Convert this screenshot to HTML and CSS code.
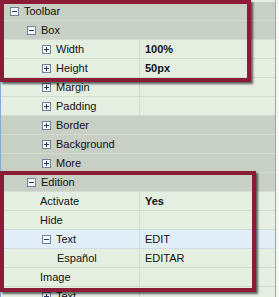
FILE: index.html
```html
<!DOCTYPE html>
<html lang="en">
<head>
    <meta charset="UTF-8">
    <title>Property Grid</title>
    <link rel="stylesheet" href="styles.css">
</head>
<body>
    <div class="panel">
        <div class="row group"><span class="name lvl1"><svg class="exp" viewBox="0 0 9 9"><rect x="0.5" y="0.5" width="8" height="8"/><path d="M2 4.5h5"/></svg>Toolbar</span></div>
        <div class="row group"><span class="name lvl2"><svg class="exp" viewBox="0 0 9 9"><rect x="0.5" y="0.5" width="8" height="8"/><path d="M2 4.5h5"/></svg>Box</span></div>
        <div class="row"><span class="name lvl3"><svg class="exp" viewBox="0 0 9 9"><rect x="0.5" y="0.5" width="8" height="8"/><path d="M2 4.5h5M4.5 2v5"/></svg>Width</span><span class="value strong">100%</span></div>
        <div class="row"><span class="name lvl3"><svg class="exp" viewBox="0 0 9 9"><rect x="0.5" y="0.5" width="8" height="8"/><path d="M2 4.5h5M4.5 2v5"/></svg>Height</span><span class="value strong">50px</span></div>
        <div class="row"><span class="name lvl3"><svg class="exp" viewBox="0 0 9 9"><rect x="0.5" y="0.5" width="8" height="8"/><path d="M2 4.5h5M4.5 2v5"/></svg>Margin</span><span class="value"></span></div>
        <div class="row"><span class="name lvl3"><svg class="exp" viewBox="0 0 9 9"><rect x="0.5" y="0.5" width="8" height="8"/><path d="M2 4.5h5M4.5 2v5"/></svg>Padding</span><span class="value"></span></div>
        <div class="row group"><span class="name lvl3"><svg class="exp" viewBox="0 0 9 9"><rect x="0.5" y="0.5" width="8" height="8"/><path d="M2 4.5h5M4.5 2v5"/></svg>Border</span></div>
        <div class="row group"><span class="name lvl3"><svg class="exp" viewBox="0 0 9 9"><rect x="0.5" y="0.5" width="8" height="8"/><path d="M2 4.5h5M4.5 2v5"/></svg>Background</span></div>
        <div class="row group"><span class="name lvl3"><svg class="exp" viewBox="0 0 9 9"><rect x="0.5" y="0.5" width="8" height="8"/><path d="M2 4.5h5M4.5 2v5"/></svg>More</span></div>
        <div class="row group"><span class="name lvl2"><svg class="exp" viewBox="0 0 9 9"><rect x="0.5" y="0.5" width="8" height="8"/><path d="M2 4.5h5"/></svg>Edition</span></div>
        <div class="row"><span class="name leaf3">Activate</span><span class="value strong">Yes</span></div>
        <div class="row"><span class="name leaf3">Hide</span><span class="value"></span></div>
        <div class="row selected"><span class="name lvl3"><svg class="exp" viewBox="0 0 9 9"><rect x="0.5" y="0.5" width="8" height="8"/><path d="M2 4.5h5"/></svg>Text</span><span class="value">EDIT</span></div>
        <div class="row"><span class="name leaf4">Español</span><span class="value">EDITAR</span></div>
        <div class="row"><span class="name leaf3">Image</span><span class="value"></span></div>
        <div class="row"><span class="name lvl3"><svg class="exp" viewBox="0 0 9 9"><rect x="0.5" y="0.5" width="8" height="8"/><path d="M2 4.5h5M4.5 2v5"/></svg>Text</span><span class="value"></span></div>
    </div>

    <div class="mark mark-box"></div>
    <div class="mark mark-edition"></div>
</body>
</html>
```

FILE: styles.css
```css
body {
    margin: 0;
    background: #f7f7f7;
    font-family: "Liberation Sans", Arial, sans-serif;
    font-size: 11px;
    color: #111;
    height: 297px;
    overflow: hidden;
    position: relative;
}
.panel {
    width: 274px;
    padding-top: 2px;
    border-left: 1px solid #7faed3;
    border-right: 1px solid #7faed3;
    background: #e4efe2;
}
.row {
    display: flex;
    height: 18px;
    align-items: center;
    border-bottom: 1px solid #d3dcd1;
    background: #e4efe2;
}
.row.group {
    background: #c8cfc5;
    border-bottom-color: #d5dbd3;
}
.row.selected {
    background: #e1eef8;
    border-bottom-color: #d0dde6;
}
.name {
    display: flex;
    align-items: center;
    width: 138px;
    height: 100%;
    box-sizing: border-box;
    white-space: nowrap;
}
.row .value {
    height: 100%;
    display: flex;
    align-items: center;
    flex: 1;
    padding-left: 5px;
    border-left: 1px solid #d3dcd1;
}
.value.strong {
    font-weight: bold;
}
.exp {
    width: 9px;
    height: 9px;
    margin-right: 5px;
    flex: none;
}
.exp rect {
    fill: #f4f6f9;
    stroke: #6f819b;
    stroke-width: 1;
}
.exp path {
    stroke: #2c3a52;
    stroke-width: 1;
    fill: none;
}
.lvl1 { padding-left: 9px; }
.lvl2 { padding-left: 26px; }
.lvl3 { padding-left: 41px; }
.leaf3 { padding-left: 39px; }
.leaf4 { padding-left: 56px; }

.mark {
    position: absolute;
    left: 0;
    box-sizing: border-box;
    border: 4px solid #8b1c37;
    box-shadow: 2px 2px 2px rgba(0, 0, 0, 0.6);
}
.mark-box {
    top: 0;
    width: 251px;
    height: 82px;
}
.mark-edition {
    top: 171px;
    width: 256px;
    height: 121px;
}
```
